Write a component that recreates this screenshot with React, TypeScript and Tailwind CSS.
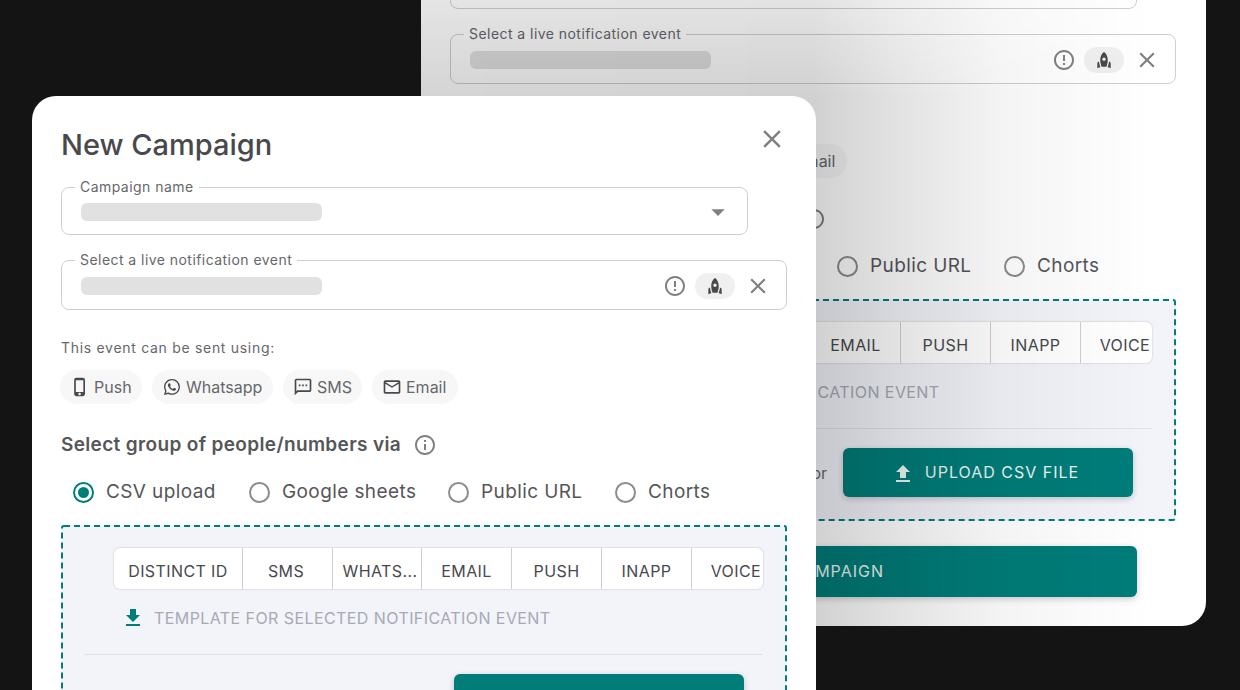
import React from 'react';
import { BsWhatsapp } from 'react-icons/bs';
import {
  MdArrowDropDown,
  MdClose,
  MdErrorOutline,
  MdFileDownload,
  MdFileUpload,
  MdInfoOutline,
  MdMailOutline,
  MdOutlinePhoneIphone,
  MdOutlineSms,
  MdRocket,
} from 'react-icons/md';

const channels = [
  { label: 'Push', icon: <MdOutlinePhoneIphone size={20} />, className: 'w-[82px]' },
  { label: 'Whatsapp', icon: <BsWhatsapp size={16} className="mx-[2px]" />, className: 'w-[121px]' },
  { label: 'SMS', icon: <MdOutlineSms size={20} />, className: 'w-[79px]' },
  { label: 'Email', icon: <MdMailOutline size={20} />, className: 'w-[86px]' },
];

const radios = [
  { label: 'CSV upload', checked: true, className: 'w-[176px]' },
  { label: 'Google sheets', checked: false, className: 'w-[199px]' },
  { label: 'Public URL', checked: false, className: 'w-[167px]' },
  { label: 'Chorts', checked: false, className: '' },
];

const columns = [
  { label: 'DISTINCT ID', className: 'w-[129px]' },
  { label: 'SMS', className: 'w-[90px] pr-[3px]' },
  { label: 'WHATS...', className: 'w-[89px] pl-[6px]' },
  { label: 'EMAIL', className: 'w-[90px]' },
  { label: 'PUSH', className: 'w-[90px]' },
  { label: 'INAPP', className: 'w-[90px]' },
];

function Field({ label, children, className }: { label: string; children: React.ReactNode; className: string }) {
  return (
    <div className={`relative flex items-center justify-between rounded-lg border border-[#cfcfcf] pt-[2px] pl-[19px] ${className}`}>
      <span className="absolute left-[13px] top-[-9px] bg-white px-[5px] text-[14px] leading-[16px] tracking-[0.45px] text-[#66676b]">
        {label}
      </span>
      <div className="h-[18px] w-[241px] rounded-md bg-[#e1e1e1]" />
      {children}
    </div>
  );
}

function CampaignCard() {
  return (
    <>
      <div className="flex items-start justify-between">
        <h1 className="mt-[29px] text-[29px] leading-[40px] font-medium text-[#48494d]">New Campaign</h1>
        <MdClose size={30} className="mt-[28px] mr-[29px] text-[#808080]" />
      </div>

      <Field label="Campaign name" className="mt-[22px] h-[48px] w-[687px] pr-[13px]">
        <MdArrowDropDown size={32} className="text-[#808080]" />
      </Field>

      <Field label="Select a live notification event" className="mt-[25px] h-[50px] w-[726px] pr-[15px]">
        <div className="flex items-center">
          <MdErrorOutline size={24} className="text-[#808080]" />
          <div className="mr-[10px] ml-[8px] flex h-[26px] w-[40px] items-center justify-center rounded-full bg-[#f0f0f0]">
            <MdRocket size={20} className="text-[#48494d]" />
          </div>
          <MdClose size={26} className="text-[#808080]" />
        </div>
      </Field>

      <p className="mt-[28px] text-[14px] leading-[20px] tracking-[0.7px] text-[#66676b]">This event can be sent using:</p>

      <div className="mt-[12px] -ml-px flex gap-[10px]">
        {channels.map((c) => (
          <div
            key={c.label}
            className={`flex h-[34px] items-center gap-[4px] rounded-full bg-[#f7f7f7] pl-[10px] text-[16px] text-[#66676b] ${c.className}`}
          >
            <span className="text-[#48494d]">{c.icon}</span>
            {c.label}
          </div>
        ))}
      </div>

      <div className="mt-[29px] flex items-center gap-[12px]">
        <h2 className="text-[19px] leading-[24px] font-semibold tracking-[0.35px] text-[#55565a]">Select group of people/numbers via</h2>
        <MdInfoOutline size={24} className="text-[#808080]" />
      </div>

      <div className="mt-[23px] flex pl-[12px]">
        {radios.map((r) => (
          <label key={r.label} className={`flex h-[24px] items-center gap-[12px] text-[19px] tracking-[0.4px] text-[#55565a] ${r.className}`}>
            <span
              className={`flex size-[21px] shrink-0 items-center justify-center rounded-full border-2 ${r.checked ? 'border-[#007d79]' : 'border-[#8c8c8c]'}`}
            >
              {r.checked && <span className="size-[11px] rounded-full bg-[#007d79]" />}
            </span>
            {r.label}
          </label>
        ))}
      </div>

      <div className="relative mt-[21px] h-[222px] w-[726px] bg-[#f2f4fa] pt-[23px] pr-[24px] pl-[23px]">
        <svg className="absolute inset-0" width="726" height="222" fill="none">
          <rect x="1" y="1" width="724" height="220" rx="2" stroke="#007d79" strokeWidth="2" strokeDasharray="6 4" />
        </svg>

        <div className="ml-[30px] flex h-[41px] overflow-hidden rounded-md bg-white shadow-[0_0_2px_rgba(0,0,0,0.25)]">
          {columns.map((c) => (
            <div
              key={c.label}
              className={`flex shrink-0 items-center justify-center border-r border-[#cfcfcf] pt-[4px] text-[16px] tracking-[0.4px] text-[#48494d] ${c.className}`}
            >
              {c.label}
            </div>
          ))}
          <div className="flex flex-1 items-center justify-end pt-[4px] pr-[2px] text-[16px] tracking-[0.4px] text-[#48494d]">VOICE</div>
        </div>

        <div className="mt-[17px] ml-[37px] flex h-[24px] items-center gap-[9px] text-[16px] tracking-[0.42px] text-[#a8a9b4]">
          <MdFileDownload size={24} className="text-[#007d79]" />
          TEMPLATE FOR SELECTED NOTIFICATION EVENT
        </div>

        <div className="mt-[24px] h-px bg-[#e1e2e6]" />

        <div className="mt-[19px] flex items-center justify-end gap-[16px] pr-[19px]">
          <span className="text-[16px] text-[#66676b]">or</span>
          <button className="flex h-[49px] w-[290px] items-center justify-center gap-[10px] rounded-md bg-[#007d79] pr-[6px] pb-[1px] text-[16px] tracking-[1px] text-[#e9f5f4] shadow-[0_2px_6px_rgba(0,0,0,0.2)]">
            <MdFileUpload size={24} className="mt-[3px]" />
            UPLOAD CSV FILE
          </button>
        </div>
      </div>

      <button className="mt-[25px] flex h-[51px] w-[687px] items-center justify-center rounded-md bg-[#007d79] pb-[1px] pl-[15px] text-[16px] tracking-[1px] text-[#e9f5f4] shadow-[0_2px_6px_rgba(0,0,0,0.2)]">
        CREATE CAMPAIGN
      </button>
    </>
  );
}

export default function App() {
  return (
    <div className="relative h-[690px] w-[1240px] overflow-hidden bg-[#141414] font-['Inter',sans-serif]">
      {/* back window, dimmed by the one in front */}
      <div className="absolute left-[421px] top-[-130px] h-[756px] w-[785px] overflow-hidden rounded-[24px] bg-white pl-[29px]">
        <CampaignCard />
        <div className="absolute inset-0 bg-[linear-gradient(to_right,rgba(0,0,0,0.17),rgba(0,0,0,0.18)_50%,rgba(0,0,0,0.11)_61%,rgba(0,0,0,0.045)_74%,rgba(0,0,0,0)_93%)] [mask-image:linear-gradient(to_bottom,rgba(0,0,0,0.6)_17%,black_30%)]" />
      </div>
      {/* front window */}
      <div className="absolute left-[32px] top-[96px] h-[756px] w-[784px] rounded-[24px] bg-white pl-[29px]">
        <CampaignCard />
      </div>
    </div>
  );
}
